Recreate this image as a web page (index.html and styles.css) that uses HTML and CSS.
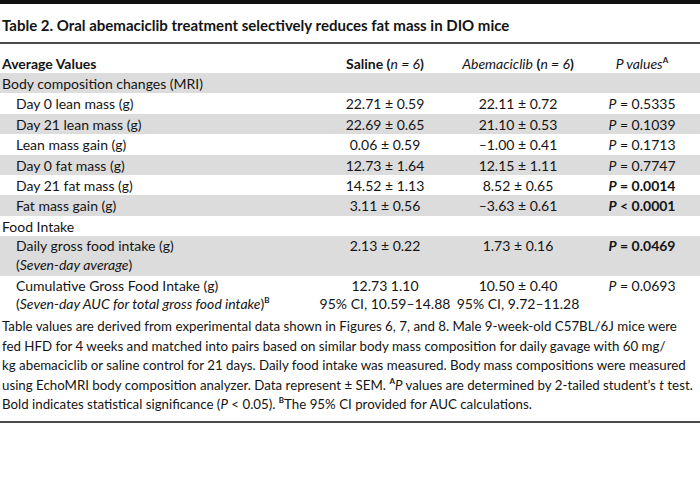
FILE: index.html
```html
<!DOCTYPE html>
<html lang="en">
<head>
<meta charset="utf-8">
<title>Table 2</title>
<link rel="stylesheet" href="styles.css">
</head>
<body>
<div class="topbar"></div>
<h1 class="title">Table 2. Oral abemaciclib treatment selectively reduces fat mass in DIO mice</h1>
<table class="data">
  <colgroup>
    <col class="c-label"><col class="c-sal"><col class="c-abe"><col class="c-p">
  </colgroup>
  <thead>
    <tr>
      <th class="lbl">Average Values</th>
      <th><b>Saline (</b><i>n = 6</i><b>)</b></th>
      <th><i>Abemaciclib</i> <b>(</b><i>n = 6</i><b>)</b></th>
      <th><i>P values</i><sup class="fn">A</sup></th>
    </tr>
  </thead>
  <tbody>
    <tr class="shade"><td class="grp">Body composition changes (MRI)</td><td></td><td></td><td></td></tr>
    <tr><td class="sub">Day 0 lean mass (g)</td><td>22.71 ± 0.59</td><td>22.11 ± 0.72</td><td><i>P</i> = 0.5335</td></tr>
    <tr class="shade"><td class="sub">Day 21 lean mass (g)</td><td>22.69 ± 0.65</td><td>21.10 ± 0.53</td><td><i>P</i> = 0.1039</td></tr>
    <tr><td class="sub">Lean mass gain (g)</td><td>0.06 ± 0.59</td><td>–1.00 ± 0.41</td><td><i>P</i> = 0.1713</td></tr>
    <tr class="shade"><td class="sub">Day 0 fat mass (g)</td><td>12.73 ± 1.64</td><td>12.15 ± 1.11</td><td><i>P</i> = 0.7747</td></tr>
    <tr><td class="sub">Day 21 fat mass (g)</td><td>14.52 ± 1.13</td><td>8.52 ± 0.65</td><td><b><i>P</i> = 0.0014</b></td></tr>
    <tr class="shade"><td class="sub">Fat mass gain (g)</td><td>3.11 ± 0.56</td><td>–3.63 ± 0.61</td><td><b><i>P</i> &lt; 0.0001</b></td></tr>
    <tr><td class="grp">Food Intake</td><td></td><td></td><td></td></tr>
    <tr class="shade two"><td class="sub">Daily gross food intake (g)<br>(<i>Seven-day average</i>)</td><td>2.13 ± 0.22</td><td>1.73 ± 0.16</td><td><b><i>P</i> = 0.0469</b></td></tr>
    <tr class="two"><td class="sub">Cumulative Gross Food Intake (g)<br>(<i>Seven-day AUC for total gross food intake</i>)<sup class="fn">B</sup></td><td>12.73 1.10<br>95% CI, 10.59–14.88</td><td>10.50 ± 0.40<br>95% CI, 9.72–11.28</td><td><i>P</i> = 0.0693</td></tr>
  </tbody>
</table>
<p class="caption">Table values are derived from experimental data shown in Figures 6, 7, and 8. Male 9-week-old C57BL/6J mice were<br>fed HFD for 4 weeks and matched into pairs based on similar body mass composition for daily gavage with 60 mg/<br>kg abemaciclib or saline control for 21 days. Daily food intake was measured. Body mass compositions were measured<br>using EchoMRI body composition analyzer. Data represent ± SEM. <sup class="fn">A</sup><i>P</i> values are determined by 2-tailed student’s <i>t</i> test.<br>Bold indicates statistical significance (<i>P</i> &lt; 0.05). <sup class="fn">B</sup>The 95% CI provided for AUC calculations.</p>
</body>
</html>
```

FILE: styles.css
```css
html, body {
  margin: 0;
  padding: 0;
  background: #ffffff;
}
body {
  width: 700px;
  font-family: Lato, "Liberation Sans", sans-serif;
  font-size: 14px;
  color: #141414;
}
.topbar {
  height: 4px;
  background: #111111;
}
.title {
  margin: 0;
  padding: 11px 2px 0 2px;
  height: 27px;
  font-size: 15px;
  line-height: 20px;
  font-weight: 700;
  border-bottom: 2px solid #4a4a4a;
}
.data {
  width: 700px;
  border-collapse: collapse;
  table-layout: fixed;
}
.c-label { width: 318px; }
.c-sal { width: 134px; }
.c-abe { width: 132px; }
.c-p { width: 116px; }
.data th {
  font-weight: 400;
  text-align: center;
  height: 29px;
  padding: 0;
  line-height: 18px;
  vertical-align: bottom;
}
.data th b { font-weight: 700; }
.data th.lbl {
  text-align: left;
  font-weight: 700;
  padding-left: 2px;
}
.data td {
  text-align: center;
  padding: 2px 0 0 0;
  height: 18.4px;
  line-height: 18.4px;
  vertical-align: top;
  white-space: nowrap;
}
.data tr.two td {
  line-height: 18.7px;
  height: 37px;
  padding-top: 1px;
  padding-bottom: 1px;
}
.data td.grp {
  text-align: left;
  padding-left: 2px;
}
.data td.sub {
  text-align: left;
  padding-left: 16px;
}
.shade td {
  background: #dcdcdc;
}
.fn {
  font-size: 8px;
  font-weight: 700;
  vertical-align: 6px;
  line-height: 0;
}
.caption {
  margin: 0;
  padding: 2px 0 6px 2px;
  font-size: 13.3px;
  line-height: 19.6px;
  white-space: nowrap;
  border-bottom: 2px solid #4a4a4a;
}
```
